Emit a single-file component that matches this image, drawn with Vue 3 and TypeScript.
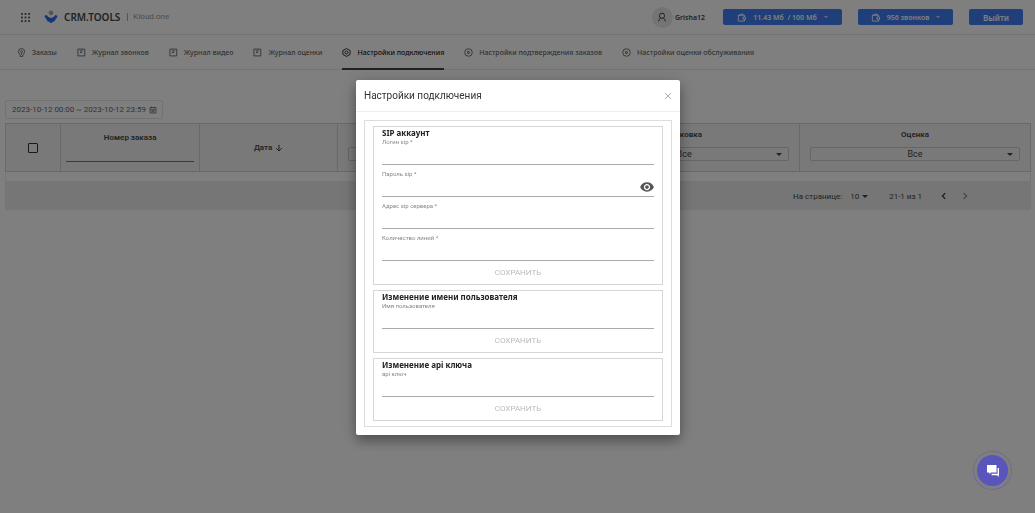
<script setup lang="ts">
import { ref } from 'vue'

interface NavItem {
  title: string
  icon: 'pin' | 'note' | 'gear' | 'play'
}

interface Field {
  id: string
  label: string
  type: 'text' | 'password'
}

interface Section {
  title: string
  fields: Field[]
}

const navItems: NavItem[] = [
  { title: 'Заказы', icon: 'pin' },
  { title: 'Журнал звонков', icon: 'note' },
  { title: 'Журнал видео', icon: 'note' },
  { title: 'Журнал оценки', icon: 'note' },
  { title: 'Настройки подключения', icon: 'gear' },
  { title: 'Настройки подтверждения заказов', icon: 'play' },
  { title: 'Настройки оценки обслуживания', icon: 'play' },
]
const activeItem = 'Настройки подключения'

const sections: Section[] = [
  {
    title: 'SIP аккаунт',
    fields: [
      { id: 'sip-login', label: 'Логин sip *', type: 'text' },
      { id: 'sip-password', label: 'Пароль sip *', type: 'password' },
      { id: 'sip-server', label: 'Адрес sip сервера *', type: 'text' },
      { id: 'sip-lines', label: 'Количество линий *', type: 'text' },
    ],
  },
  {
    title: 'Изменение имени пользователя',
    fields: [{ id: 'user-name', label: 'Имя пользователя', type: 'text' }],
  },
  {
    title: 'Изменение api ключа',
    fields: [{ id: 'api-key', label: 'api ключ', type: 'text' }],
  },
]

const values = ref<Record<string, string>>({})
const showPassword = ref(false)
const period = ref('2023-10-12 00:00 ~ 2023-10-12 23:59')
const dots = [0, 1, 2, 3, 4, 5, 6, 7, 8]
</script>

<template>
  <div class="page">
    <header class="topbar">
      <button class="plain" aria-label="Меню">
        <svg class="dots" viewBox="0 0 10 10">
          <rect v-for="n in dots" :key="n" :x="(n % 3) * 4" :y="Math.floor(n / 3) * 4" width="2" height="2" />
        </svg>
      </button>
      <a class="brand" href="#">
        <svg class="logo" viewBox="0 0 13 13">
          <circle cx="6.5" cy="2.6" r="2.2" fill="#aaa" />
          <path d="M.4 5.3 2.5 4.6Q4 7.4 6.5 7.4T10.5 4.6L12.6 5.3Q12 7.7 10.8 8.4L10 10.3 8.4 10.9 6.5 12.4 4.6 10.9 3 10.3 2.2 8.4Q1 7.7.4 5.3Z" fill="#2f6bee" />
        </svg>
        <span class="brand-name">CRM.TOOLS</span>
        <span class="brand-sub">Kloud.one</span>
      </a>
      <div class="account">
        <span class="avatar">
          <svg viewBox="0 0 10 10" class="line-icon">
            <circle cx="5" cy="3.8" r="2.6" />
            <path d="M1.6 9.4Q1.8 6.8 3.8 6M8.4 9.4Q8.2 6.8 6.2 6" />
          </svg>
        </span>
        <span class="user-name">Grisha12</span>
      </div>
      <button class="blue traffic">
        <svg viewBox="0 0 10 10" class="line-icon wallet">
          <path d="M2 2.5H8.5V4.4M8.5 7V9H1.5V2.5L6.5 1V2.5M9.4 4.5H6.6V7H9.4Z" />
        </svg>
        <span>11.43 Мб &nbsp;/ 100 Мб</span>
        <svg viewBox="0 0 4 4" class="line-icon caret"><path d="M.5 1 2 2.6 3.5 1" /></svg>
      </button>
      <button class="blue calls">
        <svg viewBox="0 0 10 10" class="line-icon wallet">
          <path d="M2 2.5H8.5V4.4M8.5 7V9H1.5V2.5L6.5 1V2.5M9.4 4.5H6.6V7H9.4Z" />
        </svg>
        <span>956 звонков</span>
        <svg viewBox="0 0 4 4" class="line-icon caret"><path d="M.5 1 2 2.6 3.5 1" /></svg>
      </button>
      <button class="blue exit">Выйти</button>
    </header>

    <nav class="nav">
      <a v-for="item in navItems" :key="item.title" href="#" class="nav-item" :class="{ active: item.title === activeItem }">
        <svg viewBox="0 0 10 10" class="line-icon nav-icon">
          <template v-if="item.icon === 'pin'">
            <path d="M3.5 9.4V7.4Q1.6 6.4 1.6 4A3.4 3.4 0 0 1 8.4 4Q8.4 6.4 6.5 7.4V9.4Z" />
            <path d="M5 2.6 6.3 4 5 5.4 3.7 4ZM5 5.4V7.4" />
          </template>
          <template v-else-if="item.icon === 'note'">
            <path d="M1 1.2H8.6V8.8H1ZM3.2 3.2H6.6M3.2 5H5.6" />
          </template>
          <template v-else-if="item.icon === 'gear'">
            <path d="M5 .6 9 2.8V7.2L5 9.4 1 7.2V2.8Z" />
            <circle cx="5" cy="5" r="1.7" />
          </template>
          <template v-else>
            <circle cx="5" cy="5" r="4.2" />
            <path d="M4.2 3.5 6.6 5 4.2 6.5Z" />
          </template>
        </svg>
        <span>{{ item.title }}</span>
      </a>
    </nav>

    <main class="content">
      <div class="period">
        <input v-model="period" aria-label="Период" />
        <svg viewBox="0 0 8 8" class="calendar">
          <path d="M1 1.5H7V7H1ZM1 3.2H7M2.5.5V2M5.5.5V2M2.4 4.6H5.6M2.4 5.8H5.6" />
        </svg>
      </div>

      <table class="orders">
        <colgroup>
          <col class="c-check" />
          <col class="c-mid" />
          <col class="c-mid" />
          <col class="c-wide" />
          <col class="c-wide" />
          <col class="c-wide" />
        </colgroup>
        <thead>
          <tr>
            <th><input type="checkbox" class="check" aria-label="Выбрать все" /></th>
            <th>
              <label class="head search-head" for="order-number">Номер заказа</label>
              <input id="order-number" class="order-input" />
            </th>
            <th>
              <button class="plain sort">
                Дата
                <svg viewBox="0 0 8 8" class="line-icon arrow"><path d="M4 .8V7M1.2 4.2 4 7 6.8 4.2" /></svg>
              </button>
            </th>
            <th class="filter-cell">
              <label class="head" for="f-status">Статус</label>
              <span class="select-box"><select id="f-status" class="filter"><option>Все</option></select></span>
            </th>
            <th class="filter-cell">
              <label class="head" for="f-pack">Упаковка</label>
              <span class="select-box"><select id="f-pack" class="filter"><option>Все</option></select></span>
            </th>
            <th class="filter-cell">
              <label class="head" for="f-rate">Оценка</label>
              <span class="select-box"><select id="f-rate" class="filter"><option>Все</option></select></span>
            </th>
          </tr>
        </thead>
        <tbody>
          <tr><td colspan="6"></td></tr>
        </tbody>
      </table>

      <div class="pager">
        <label for="per-page">На странице:</label>
        <span class="per-page"><select id="per-page"><option>10</option></select></span>
        <span class="range">21-1 из 1</span>
        <button class="plain" aria-label="Назад">
          <svg viewBox="0 0 8 8" class="chev"><path d="M5.2 1.2 2.4 4 5.2 6.8" /></svg>
        </button>
        <button class="plain next" aria-label="Вперёд" disabled>
          <svg viewBox="0 0 8 8" class="chev"><path d="M2.8 1.2 5.6 4 2.8 6.8" /></svg>
        </button>
      </div>
    </main>

    <div class="overlay">
      <div class="modal" role="dialog" aria-labelledby="modal-title">
        <div class="modal-head">
          <h2 id="modal-title">Настройки подключения</h2>
          <button class="plain close" aria-label="Закрыть">
            <svg viewBox="0 0 8 8"><path d="M1 1 7 7M7 1 1 7" /></svg>
          </button>
        </div>
        <div class="modal-body">
          <div class="sections">
            <form v-for="section in sections" :key="section.title" class="section" @submit.prevent>
              <h3>{{ section.title }}</h3>
              <div class="fields">
                <div v-for="field in section.fields" :key="field.id">
                  <label :for="field.id">{{ field.label }}</label>
                  <div class="input-row">
                    <input :id="field.id" v-model="values[field.id]" :type="field.type === 'password' && !showPassword ? 'password' : 'text'" />
                    <button v-if="field.type === 'password'" type="button" class="plain eye" aria-label="Показать пароль" @click="showPassword = !showPassword">
                      <svg viewBox="1 4 22 16">
                        <path d="M12 4.5C7 4.5 2.73 7.61 1 12c1.73 4.39 6 7.5 11 7.5s9.27-3.11 11-7.5c-1.73-4.39-6-7.5-11-7.5zM12 17c-2.76 0-5-2.24-5-5s2.24-5 5-5 5 2.24 5 5-2.24 5-5 5zm0-8c-1.66 0-3 1.34-3 3s1.34 3 3 3 3-1.34 3-3-1.34-3-3-3z" />
                      </svg>
                    </button>
                  </div>
                </div>
              </div>
              <button type="submit" class="save" disabled>СОХРАНИТЬ</button>
            </form>
          </div>
        </div>
      </div>
    </div>

    <button class="chat" aria-label="Чат">
      <span class="chat-core">
        <svg viewBox="0 0 14 14">
          <path d="M1 1H10.5V8.5H5L3.4 10.2V8.5H1Z" />
          <path d="M11.6 4H13V11.3H12.6V13L11 11.3H5.6V9.8H11.6Z" />
        </svg>
      </span>
    </button>
  </div>
</template>

<style>
body {
  margin: 0;
  background: #fff;
}
</style>

<style scoped>
* {
  box-sizing: border-box;
}

.page {
  min-height: 100vh;
  font-family: 'Noto Sans', 'Open Sans', sans-serif;
  font-size: 7px;
  color: #444;
}

button,
input,
select {
  font: inherit;
  color: inherit;
  margin: 0;
}

.plain {
  display: flex;
  align-items: center;
  padding: 0;
  border: 0;
  background: none;
}

.line-icon {
  fill: none;
  stroke: currentColor;
  stroke-width: 1;
}

.topbar {
  display: flex;
  align-items: center;
  height: 35px;
  padding: 0 12px 0 21px;
  border-bottom: 1px solid #e6e6e6;
}

.dots {
  width: 9px;
  height: 9px;
  fill: #555;
}

.brand {
  display: flex;
  align-items: center;
  margin-left: 14px;
  margin-right: auto;
  color: #444;
  text-decoration: none;
}

.logo {
  width: 14px;
  height: 14px;
}

.brand-name {
  margin-left: 6px;
  font-size: 10px;
  font-weight: 600;
}

.brand-sub {
  margin-left: 7px;
  padding-left: 5px;
  border-left: 1px solid #aaa;
  font-family: Roboto, sans-serif;
  font-size: 8px;
  line-height: 8px;
  color: #999;
}

.account {
  display: flex;
  align-items: center;
  gap: 2px;
  margin-right: 18px;
}

.avatar {
  display: flex;
  align-items: center;
  justify-content: center;
  width: 21px;
  height: 21px;
  border-radius: 50%;
  background: #e9e9e9;
}

.avatar svg {
  width: 10px;
  height: 10px;
}

.user-name {
  font-weight: 600;
}

.blue {
  display: flex;
  align-items: center;
  justify-content: center;
  height: 16px;
  padding: 0;
  border: 0;
  border-radius: 2px;
  background: #3f7df5;
  color: #fff;
  font-weight: 600;
}

.traffic {
  width: 119px;
  margin-right: 16px;
}

.calls {
  width: 95px;
  margin-right: 16px;
}

.exit {
  width: 54px;
  font-size: 8px;
}

.wallet {
  width: 9px;
  height: 9px;
  margin-right: 7px;
}

.caret {
  width: 4px;
  height: 4px;
  margin-left: 7px;
}

.nav {
  display: flex;
  gap: 20px;
  height: 35px;
  padding-left: 17px;
  border-bottom: 1px solid #e6e6e6;
}

.nav-item {
  display: flex;
  align-items: center;
  gap: 6px;
  height: 35px;
  padding-top: 2px;
  border-bottom: 2px solid transparent;
  color: #666;
  font-weight: 500;
  text-decoration: none;
  white-space: nowrap;
}

.nav-item.active {
  color: #222;
  border-color: #444;
}

.nav-icon {
  width: 9px;
  height: 9px;
}

.content {
  padding: 30px 4px 0 5px;
}

.period {
  display: flex;
  align-items: center;
  width: 158px;
  height: 19px;
  margin-bottom: 4px;
  padding: 0 5px 0 6px;
  border: 1px solid #e4e4e4;
  border-radius: 2px;
}

.period input {
  flex: 1;
  min-width: 0;
  padding: 0;
  border: 0;
  background: none;
  color: #666;
  font-family: Roboto, sans-serif;
  font-size: 8px;
}

.calendar {
  width: 8px;
  height: 8px;
  fill: none;
  stroke: #888;
}

.orders {
  width: 100%;
  table-layout: fixed;
  border-collapse: collapse;
  font-family: Roboto, sans-serif;
  font-size: 8px;
}

.c-check {
  width: 5.4%;
}

.c-mid {
  width: 13.5%;
}

.c-wide {
  width: 22.5%;
}

.orders th {
  height: 48px;
  padding: 0 5px;
  border: 1px solid #d2d2d2;
  background: #f3f3f3;
  font-weight: 600;
  text-align: center;
}

.orders .filter-cell {
  padding-top: 6px;
  vertical-align: top;
}

.orders td {
  height: 10px;
  padding: 0;
  border: 1px solid #ececec;
}

.head {
  display: block;
  height: 17px;
  line-height: 10px;
}

.search-head {
  height: 12px;
}

.check {
  display: block;
  appearance: none;
  width: 10px;
  height: 10px;
  margin: 0 auto;
  border: 1px solid #333;
  border-radius: 1px;
}

.order-input {
  display: block;
  width: 100%;
  height: 17px;
  padding: 0;
  border: 0;
  border-bottom: 1px solid #777;
  background: none;
}

.sort {
  gap: 3px;
  margin: 0 auto;
}

.arrow {
  width: 8px;
  height: 8px;
}

.select-box,
.per-page {
  display: flex;
  align-items: center;
  position: relative;
}

.select-box {
  margin: 0 5px;
}

.select-box::after,
.per-page::after {
  content: '';
  position: absolute;
  right: 7px;
  border: 3px solid transparent;
  border-top-color: #444;
  border-bottom-width: 0;
}

.per-page::after {
  right: 0;
}

.filter {
  appearance: none;
  width: 100%;
  height: 14px;
  padding: 0;
  border: 1px solid #ccc;
  border-radius: 2px;
  background: none;
  font-size: 9px;
  line-height: 10px;
  font-weight: 400;
  text-align: center;
  text-align-last: center;
}

.pager {
  display: flex;
  align-items: center;
  justify-content: flex-end;
  height: 28px;
  padding-right: 62px;
  background: #ececec;
  font-family: Roboto, sans-serif;
  font-size: 8px;
}

.per-page {
  width: 18px;
  margin: 0 21px 0 8px;
}

.per-page select {
  appearance: none;
  width: 100%;
  padding: 0;
  border: 0;
  background: none;
}

.range {
  margin-right: 18px;
}

.chev {
  width: 8px;
  height: 8px;
  fill: none;
  stroke: #333;
  stroke-width: 1.2;
}

.next {
  margin-left: 13px;
}

.next .chev {
  stroke: #888;
}

.overlay {
  position: fixed;
  inset: 0;
  display: flex;
  align-items: center;
  justify-content: center;
  padding: 2px 0 0 1px;
  background: rgba(0, 0, 0, 0.5);
}

.modal {
  width: 324px;
  max-width: 100%;
  border-radius: 2px;
  background: #fff;
  box-shadow: 0 6px 12px rgba(0, 0, 0, 0.3), 0 2px 20px rgba(0, 0, 0, 0.15);
}

.modal-head {
  display: flex;
  align-items: center;
  justify-content: space-between;
  height: 32px;
  padding: 0 8px;
  border-bottom: 1px solid #eee;
}

.modal-head h2 {
  margin: 0;
  font-family: Roboto, sans-serif;
  font-size: 10px;
  font-weight: 400;
  color: #333;
}

.close svg {
  width: 8px;
  height: 8px;
  fill: none;
  stroke: #aaa;
}

.modal-body {
  padding: 8px;
}

.sections {
  display: flex;
  flex-direction: column;
  gap: 5px;
  padding: 5px 8px;
  border: 1px solid #ddd;
}

.section {
  padding: 0 8px;
  border: 1px solid #d6d6d6;
}

.section h3 {
  margin: 0;
  font-size: 8px;
  line-height: 12px;
  font-weight: 700;
  color: #222;
}

.fields {
  display: flex;
  flex-direction: column;
  gap: 6px;
}

.fields label {
  display: block;
  font-family: Roboto, sans-serif;
  font-size: 6px;
  line-height: 6px;
  color: #888;
}

.input-row {
  display: flex;
  align-items: center;
  height: 20px;
  border-bottom: 1px solid #aaa;
}

.input-row input {
  flex: 1;
  min-width: 0;
  height: 18px;
  padding: 0;
  border: 0;
  outline: 0;
  background: none;
  font-size: 8px;
}

.eye svg {
  width: 14px;
  height: 10px;
  fill: #555;
}

.save {
  display: block;
  width: 100%;
  height: 23px;
  padding: 0;
  border: 0;
  background: none;
  font-family: Roboto, sans-serif;
  font-size: 8px;
  color: #bbb;
}

.chat {
  position: fixed;
  right: 23px;
  bottom: 23px;
  width: 39px;
  height: 39px;
  padding: 3px;
  border: 1px dotted #5b55c0;
  border-radius: 50%;
  background: none;
}

.chat-core {
  display: flex;
  align-items: center;
  justify-content: center;
  height: 100%;
  border-radius: 50%;
  background: #5a54bd;
}

.chat svg {
  width: 14px;
  height: 14px;
  fill: #fff;
}
</style>
